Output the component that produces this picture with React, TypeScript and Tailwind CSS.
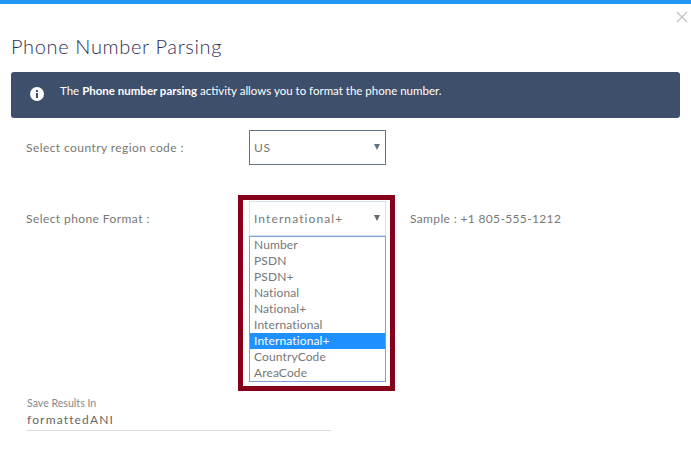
export default function App() {
  const options = ["Number", "PSDN", "PSDN+", "National", "National+", "International", "International+", "CountryCode", "AreaCode"];
  return (
    <div className="w-[691px] h-[459px] bg-white overflow-hidden flex flex-col font-['Lato',sans-serif]">
      <div className="h-1 bg-[#2196f3] shrink-0" />
      <div className="flex justify-end h-[26px] pr-[3px] pt-[7px]">
        <svg width="12" height="12" viewBox="0 0 12 12" className="block">
          <path d="M1 1L11 11M11 1L1 11" stroke="#c4c4c4" strokeWidth="1.4" fill="none" />
        </svg>
      </div>
      <h1 className="ml-[11px] h-[42px] text-[20px] leading-[32px] tracking-[0.65px] text-[#2f2f55] font-light">Phone Number Parsing</h1>
      <div className="mx-[11px] h-[46px] bg-[#3d4f6b] rounded-[3px] flex items-start pt-[12px] pl-[19px] text-white text-[11.5px] leading-[14px] shrink-0">
        <svg width="14" height="14" viewBox="0 0 14 14" className="mt-[3px] mr-[16px] shrink-0">
          <circle cx="7" cy="7" r="7" fill="#ffffff" />
          <rect x="6" y="6" width="2" height="5" fill="#3d4f6b" />
          <rect x="6" y="3" width="2" height="2" fill="#3d4f6b" />
        </svg>
        <p>The <b className="font-bold">Phone number parsing</b> activity allows you to format the phone number.</p>
      </div>
      <div className="flex items-center ml-[26px] mt-[12px] h-[35px] shrink-0">
        <div className="w-[223px] text-[12px] tracking-[0.42px] text-[#777777]">Select country region code :</div>
        <div className="w-[137px] h-[35px] border border-[#5f7488] flex items-center justify-between pl-[4px] pr-[5px] text-[12px] tracking-[0.6px] text-[#777777]">
          <span>US</span>
          <span className="w-0 h-0 mb-[2px] border-x-[3px] border-x-transparent border-t-[6px] border-t-[#5f7488]" />
        </div>
      </div>
      <div className="flex items-start ml-[26px] mt-[30px] shrink-0">
        <div className="w-[212px] mt-[16px] text-[12px] leading-[16px] tracking-[0.42px] text-[#777777]">Select phone Format :</div>
        <div className="w-[157px] h-[196px] border-[5px] border-[#85001a] pl-[6px] pt-px shrink-0">
          <div className="w-[137px] h-[35px] border border-[#cfe3f2] flex items-center justify-between pl-[4px] pr-[5px] text-[12px] tracking-[1.1px] text-[#777777]">
            <span>International+</span>
            <span className="w-0 h-0 mb-[2px] border-x-[3px] border-x-transparent border-t-[6px] border-t-[#666666]" />
          </div>
          <ul className="w-[137px] h-[146px] border border-[#7f9ed6] text-[12px] leading-[16px] tracking-[0.12px] text-[#777777]">
            {options.map((o) => (
              <li key={o} className={o === "International+" ? "pl-[4px] h-4 bg-[#1e90ff] text-white" : "pl-[4px] h-4"}>{o}</li>
            ))}
          </ul>
        </div>
        <div className="ml-[15px] mt-[16px] text-[12px] leading-[16px] tracking-[0.35px] text-[#777777]">Sample : +1 805-555-1212</div>
      </div>
      <div className="ml-[26px] w-[305px] mt-[6px] border-b border-[#dddddd] h-[34px] shrink-0">
        <div className="pl-px text-[10.6px] leading-[12px] text-[#888888]">Save Results In</div>
        <div className="pl-px mt-[3px] text-[12px] leading-[16px] tracking-[1.15px] text-[#666666]">formattedANI</div>
      </div>
    </div>
  );
}
